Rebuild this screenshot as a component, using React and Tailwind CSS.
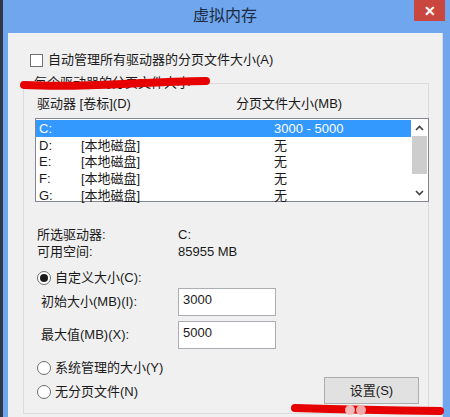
import React from "react";

const font = { fontFamily: '"Liberation Sans", "Noto Sans CJK SC", sans-serif' };

const drives = [
  { letter: "C:", label: "", size: "3000 - 5000", selected: true },
  { letter: "D:", label: "[本地磁盘]", size: "无" },
  { letter: "E:", label: "[本地磁盘]", size: "无" },
  { letter: "F:", label: "[本地磁盘]", size: "无" },
  { letter: "G:", label: "[本地磁盘]", size: "无" },
];

const Radio = ({ checked, label }) => (
  <div className="flex items-center gap-[4px]">
    <span className="w-[14px] h-[14px] rounded-full border border-[#6d6d6d] bg-white flex items-center justify-center">
      {checked && <span className="w-[8px] h-[8px] rounded-full bg-[#1a1a1a]" />}
    </span>
    <span className="leading-[16px]">{label}</span>
  </div>
);

const App = () => {
  return (
    <div
      className="w-[450px] h-[417px] bg-[#6fa6ee] border-l-[3px] border-[#303845] flex flex-col overflow-hidden relative text-[13px] text-[#1a1a1a]"
      style={font}
    >
      {/* Title bar */}
      <div className="h-[33px] shrink-0 relative flex items-center justify-center">
        <span className="text-[16px] text-[#1c2b40] mt-[-2px] ml-[-3px]">虚拟内存</span>
        <div className="absolute top-0 right-[5px] w-[31px] h-[21px] bg-[#c9473f] flex items-center justify-center">
          <span className="text-white text-[14px] leading-none font-bold">✕</span>
        </div>
      </div>

      {/* Content */}
      <div className="flex-1 ml-[5px] mr-[7px] bg-[#f0f0f0] border-r border-[#d9d9d9] relative">
        {/* auto manage checkbox */}
        <div className="flex items-center gap-[5px] pl-[22px] pt-[18px] h-[36px]">
          <span className="w-[13px] h-[13px] border border-[#707070] bg-white" />
          <span className="leading-[16px]">自动管理所有驱动器的分页文件大小(A)</span>
        </div>

        {/* Group box */}
        <div className="ml-[15px] mr-[13px] mt-[14px] h-[331px] border border-[#dcdcdc] relative">
          <span className="absolute top-[-9px] left-[8px] px-[2px] bg-[#f0f0f0] leading-[16px]">
            每个驱动器的分页文件大小
          </span>

          {/* headers */}
          <div className="flex pt-[12px] h-[34px] pl-[13px] leading-[16px]">
            <span className="w-[199px]">驱动器 [卷标](D)</span>
            <span>分页文件大小(MB)</span>
          </div>

          {/* list */}
          <div className="ml-[11px] mr-[-1px] h-[84px] border border-[#828790] bg-white flex">
            <div className="flex-1 pt-[1px]">
              {drives.map((d) => (
                <div
                  key={d.letter}
                  className={
                    "flex h-[16.75px] leading-[15px] items-center pl-[3px] " +
                    (d.selected ? "bg-[#3399ff] text-white" : "")
                  }
                >
                  <span className="w-[42px]">{d.letter}</span>
                  <span className="w-[193px]">{d.label}</span>
                  <span>{d.size}</span>
                </div>
              ))}
            </div>
            <div className="w-[17px] flex flex-col items-center bg-white">
              <div className="h-[17px] flex items-center justify-center">
                <svg width="9" height="6" viewBox="0 0 9 6">
                  <path d="M1 5 L4.5 1.5 L8 5" stroke="#404040" strokeWidth="1.6" fill="none" />
                </svg>
              </div>
              <div className="w-[15px] h-[38px] bg-[#cdcdcd]" />
              <div className="flex-1" />
              <div className="h-[17px] flex items-center justify-center">
                <svg width="9" height="6" viewBox="0 0 9 6">
                  <path d="M1 1 L4.5 4.5 L8 1" stroke="#404040" strokeWidth="1.6" fill="none" />
                </svg>
              </div>
            </div>
          </div>

          {/* selected drive info */}
          <div className="pl-[13px] mt-[25px] flex flex-col gap-[1px]">
            <div className="flex leading-[16px]">
              <span className="w-[141px]">所选驱动器:</span>
              <span>C:</span>
            </div>
            <div className="flex leading-[16px]">
              <span className="w-[141px]">可用空间:</span>
              <span>85955 MB</span>
            </div>
          </div>

          <div className="pl-[13px] mt-[10px] h-[16px] flex items-center">
            <Radio checked label="自定义大小(C):" />
          </div>

          <div className="flex items-center pl-[17px] mt-[2px]">
            <span className="w-[137px] leading-[16px]">初始大小(MB)(I):</span>
            <div className="w-[98px] h-[28px] border border-[#abadb3] bg-white pl-[4px] leading-[22px]">3000</div>
          </div>
          <div className="flex items-center pl-[17px] mt-[5px]">
            <span className="w-[137px] leading-[16px]">最大值(MB)(X):</span>
            <div className="w-[98px] h-[28px] border border-[#abadb3] bg-white pl-[4px] leading-[22px]">5000</div>
          </div>

          <div className="pl-[13px] mt-[11px] h-[16px] flex items-center">
            <Radio label="系统管理的大小(Y)" />
          </div>
          <div className="pl-[13px] mt-[8px] h-[16px] flex items-center">
            <Radio label="无分页文件(N)" />
          </div>

          <div className="absolute right-[9px] top-[293px] w-[95px] h-[27px] border border-[#adadad] bg-[#e1e1e1] flex items-center justify-center leading-[16px]">
            设置(S)
          </div>
        </div>
      </div>

      {/* annotation strokes */}
      <svg className="absolute left-0 top-0 pointer-events-none" width="450" height="417">
        <path d="M21 85 Q60 87 120 84 T203 81" stroke="#e60000" strokeWidth="8" strokeLinecap="round" fill="none" />
        <path d="M292 408 Q360 410 437 411" stroke="#e60000" strokeWidth="8" strokeLinecap="round" fill="none" />
        <circle cx="347" cy="410" r="5" fill="#f6b9b9" />
        <circle cx="358" cy="410" r="5" fill="#f3a9a9" />
      </svg>
    </div>
  );
};

export default App;
